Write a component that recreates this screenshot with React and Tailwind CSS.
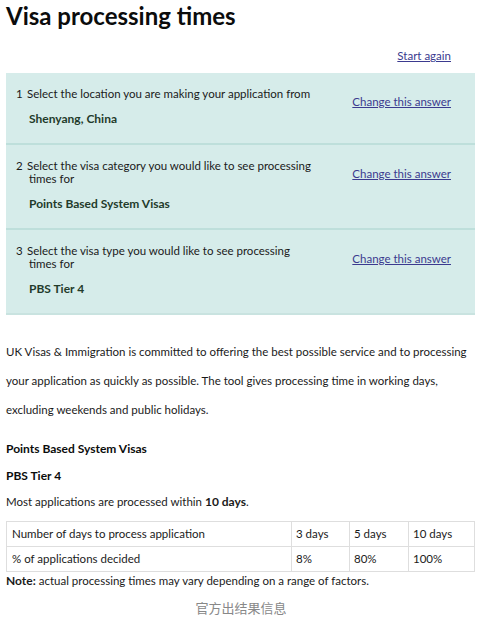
import React from "react";

const answers = [
  {
    n: "1",
    question: "Select the location you are making your application from",
    answer: "Shenyang, China",
  },
  {
    n: "2",
    question: "Select the visa category you would like to see processing times for",
    answer: "Points Based System Visas",
  },
  {
    n: "3",
    question: "Select the visa type you would like to see processing times for",
    answer: "PBS Tier 4",
  },
];

export default function App() {
  return (
    <div
      className="w-[482px] h-[621px] bg-white text-[#0b0c0c] overflow-hidden"
      style={{ fontFamily: 'Lato, "Noto Sans CJK SC", sans-serif' }}
    >
      <h1 className="pl-[6px] pt-[3px] text-[24px] leading-[26px] font-bold">
        Visa processing times
      </h1>

      <div className="flex justify-end pr-[31px] mt-[20px] h-[22px]">
        <a href="#" className="text-[11.5px] leading-[14px] text-[#3b3a8f] underline">
          Start again
        </a>
      </div>

      {/* Answer summary */}
      <div className="mx-[6px] w-[469px] bg-[#d6ecea] mt-[2px]">
        {answers.map((a, i) => (
          <div
            key={a.n}
            className={
              "flex justify-between pt-[14px] pb-[18px] pr-[24px] " +
              (i < answers.length - 1 ? "border-b-2 border-[#bedfdb]" : "")
            }
          >
            <div className="w-[318px]">
              <div className="flex text-[11.5px] leading-[13px] text-[#1a1a1a]">
                <span className="w-[21px] pl-[10px] shrink-0">{a.n}</span>
                <span className="w-[292px] pl-[2px] -indent-[2px]">{a.question}</span>
              </div>
              <div className="pl-[23px] mt-[12px] text-[12px] leading-[13px] font-bold text-[#233b2b]">
                {a.answer}
              </div>
            </div>
            <a
              href="#"
              className="mt-[8px] text-[11.5px] leading-[14px] text-[#3b3a8f] underline whitespace-nowrap"
            >
              Change this answer
            </a>
          </div>
        ))}
      </div>
      <div className="mx-[6px] w-[469px] h-[2px] bg-[#c9e3e0]" />

      <p className="px-[6px] mt-[22px] text-[11.5px] leading-[29px] text-[#1a1a1a]">
        UK Visas &amp; Immigration is committed to offering the best possible service and to processing
        your application as quickly as possible. The tool gives processing time in working days,
        excluding weekends and public holidays.
      </p>

      <h2 className="px-[6px] mt-[18px] text-[12px] leading-[14px] font-bold">
        Points Based System Visas
      </h2>
      <h3 className="px-[6px] mt-[13px] text-[12px] leading-[14px] font-bold">PBS Tier 4</h3>
      <p className="px-[6px] mt-[12px] text-[11.5px] leading-[14px] text-[#1a1a1a]">
        Most applications are processed within <b className="text-[12px]">10 days</b>.
      </p>

      <table className="ml-[6px] mt-[12px] w-[469px] border-collapse text-[11.5px] text-[#1a1a1a]">
        <tbody>
          <tr className="h-[25px]">
            <td className="w-[285px] border border-[#dedede] pl-[5px]">
              Number of days to process application
            </td>
            <td className="w-[58px] border border-[#dedede] pl-[4px]">3 days</td>
            <td className="w-[59px] border border-[#dedede] pl-[4px]">5 days</td>
            <td className="border border-[#dedede] pl-[4px]">10 days</td>
          </tr>
          <tr className="h-[25px]">
            <td className="border border-[#dedede] pl-[5px]">% of applications decided</td>
            <td className="border border-[#dedede] pl-[4px]">8%</td>
            <td className="border border-[#dedede] pl-[4px]">80%</td>
            <td className="border border-[#dedede] pl-[4px]">100%</td>
          </tr>
        </tbody>
      </table>

      <p className="px-[6px] mt-[2px] text-[11.5px] leading-[14px] text-[#1a1a1a]">
        <b className="text-[12px]">Note:</b> actual processing times may vary depending on a range of factors.
      </p>

      <p className="mt-[12px] text-center text-[13px] leading-[16px] text-[#888]">官方出结果信息</p>
    </div>
  );
}
